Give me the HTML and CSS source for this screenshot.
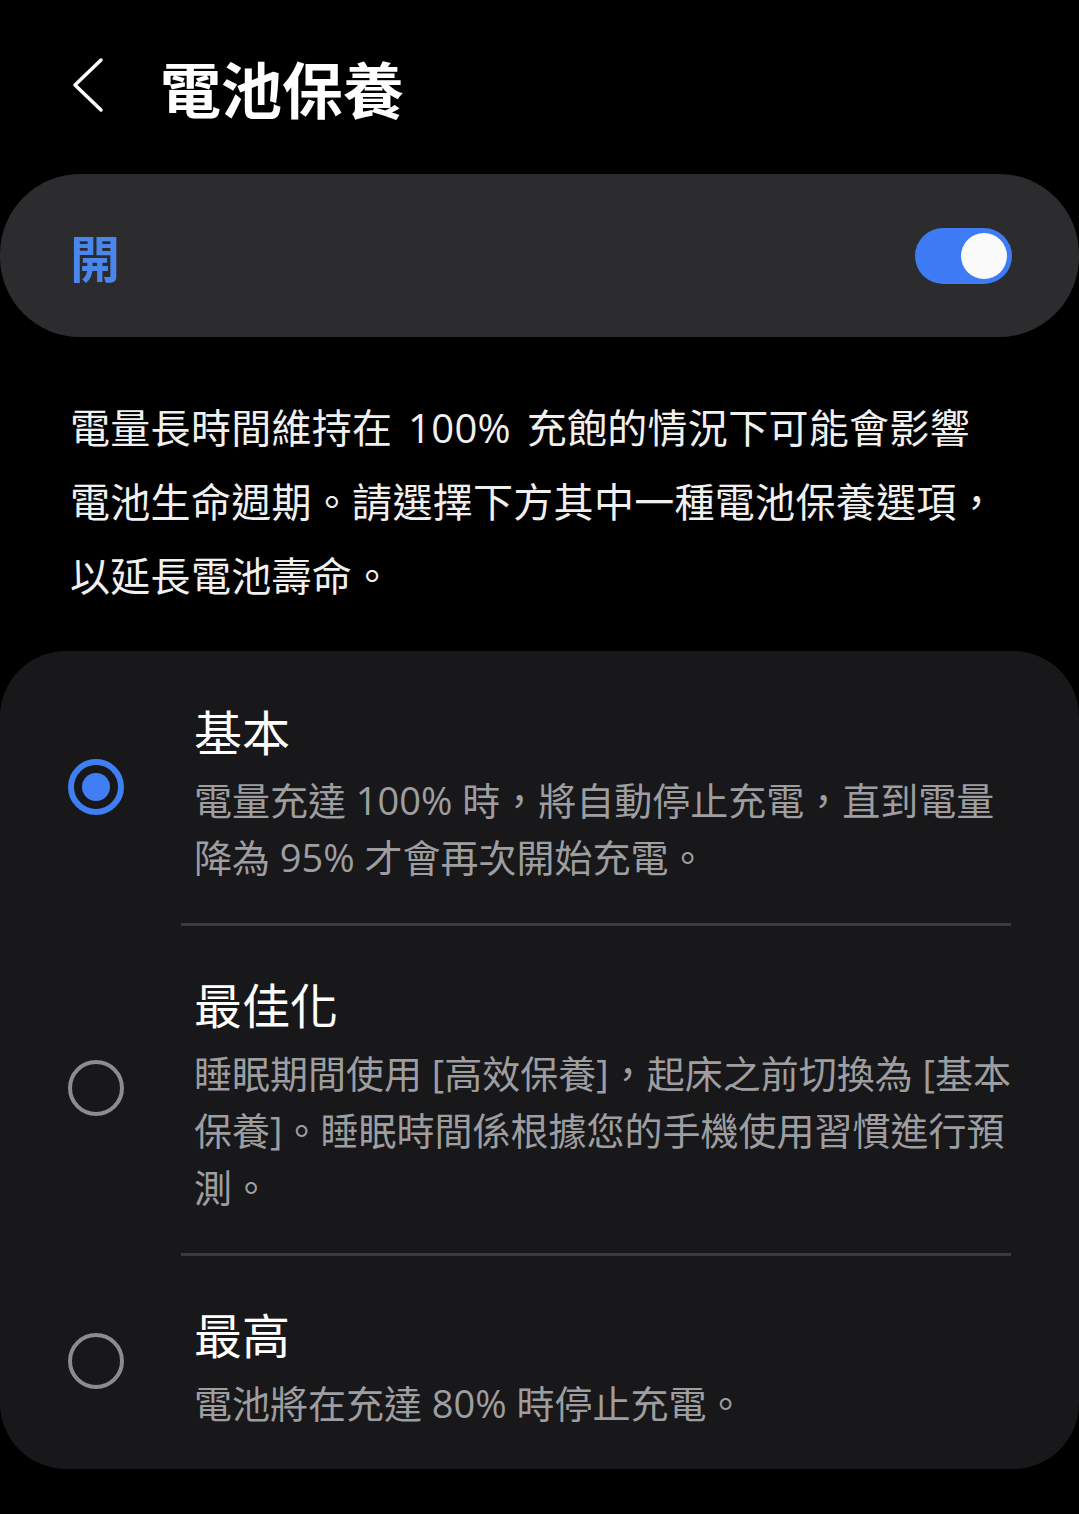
FILE: index.html
```html
<!DOCTYPE html>
<html lang="zh-Hant">
<head>
<meta charset="utf-8">
<title>電池保養</title>
<link rel="stylesheet" href="styles.css">
</head>
<body>
<header class="header">
  <span class="back">
    <svg width="32" height="56" viewBox="0 0 32 56"><polyline points="29,3 3,28 29,53" fill="none" stroke="#fff" stroke-width="3.5" stroke-linecap="round" stroke-linejoin="round"/></svg>
  </span>
  <h1 class="title">電池保養</h1>
</header>

<section class="master">
  <span class="master-label">開</span>
  <span class="switch"><span class="knob"></span></span>
</section>

<p class="intro">電量長時間維持在 100% 充飽的情況下可能會影響電池生命週期。請選擇下方其中一種電池保養選項，以延長電池壽命。</p>

<section class="options">
  <div class="option">
    <span class="radio radio-on"><span class="dot"></span></span>
    <div class="option-text">
      <div class="option-title">基本</div>
      <div class="option-desc">電量充達 100% 時，將自動停止充電，直到電量降為 95% 才會再次開始充電。</div>
    </div>
  </div>
  <div class="divider"></div>
  <div class="option">
    <span class="radio"></span>
    <div class="option-text">
      <div class="option-title">最佳化</div>
      <div class="option-desc">睡眠期間使用 [高效保養]，起床之前切換為 [基本保養]。睡眠時間係根據您的手機使用習慣進行預測。</div>
    </div>
  </div>
  <div class="divider"></div>
  <div class="option">
    <span class="radio"></span>
    <div class="option-text">
      <div class="option-title">最高</div>
      <div class="option-desc">電池將在充達 80% 時停止充電。</div>
    </div>
  </div>
</section>
</body>
</html>
```

FILE: styles.css
```css
html, body {
  margin: 0;
  padding: 0;
  background: #000;
}
body {
  width: 1079px;
  font-family: "Open Sans", "Noto Sans CJK TC", sans-serif;
  color: #fff;
}
.header {
  display: flex;
  align-items: center;
  padding: 48px 0 0 72px;
  height: 80px;
}
.back {
  display: flex;
  width: 32px;
  height: 56px;
  margin-top: -6px;
}
.title {
  margin: 0 0 0 56px;
  font-family: "Noto Sans CJK TC", sans-serif;
  font-size: 61px;
  font-weight: 700;
  line-height: 80px;
  color: #fff;
}
.master {
  margin-top: 46px;
  height: 163px;
  background: #2c2c2e;
  border-radius: 80px;
  display: flex;
  align-items: center;
  justify-content: space-between;
  padding: 0 67px 0 70px;
}
.master-label {
  font-family: "Noto Sans CJK TC", sans-serif;
  font-size: 50px;
  font-weight: 700;
  color: #4a86ec;
  line-height: 60px;
}
.switch {
  width: 97px;
  height: 56px;
  border-radius: 28px;
  background: #3d7cf4;
  display: flex;
  align-items: center;
  justify-content: flex-end;
  padding-right: 5px;
  box-sizing: border-box;
}
.knob {
  width: 46px;
  height: 46px;
  border-radius: 50%;
  background: #fafafa;
}
.intro {
  margin: 54px 0 0 0;
  padding: 0 75px 0 70px;
  font-size: 40px;
  line-height: 74px;
  letter-spacing: 0.3px;
  word-spacing: 5px;
  color: #f0f0f0;
}
.options {
  margin-top: 38px;
  background: #18181a;
  border-radius: 66px;
  padding-top: 2px;
  overflow: hidden;
}
.option {
  display: flex;
  align-items: center;
  padding: 46px 58px 37px 68px;
}
.radio {
  flex: none;
  width: 56px;
  height: 56px;
  box-sizing: border-box;
  border-radius: 50%;
  border: 4px solid #8c8c8e;
  margin-bottom: 12px;
  display: flex;
  align-items: center;
  justify-content: center;
}
.radio-on {
  border: 6px solid #3f7ef3;
}
.dot {
  width: 28px;
  height: 28px;
  border-radius: 50%;
  background: #3f7ef3;
}
.option-text {
  margin-left: 70px;
  flex: 1;
}
.option-title {
  font-size: 48px;
  line-height: 68px;
  color: #fff;
  margin-bottom: 5px;
}
.option-desc {
  font-size: 38px;
  line-height: 57px;
  color: #9e9ea0;
}
.divider {
  height: 3px;
  background: #3a3a3c;
  margin: 0 68px 0 181px;
}
```
